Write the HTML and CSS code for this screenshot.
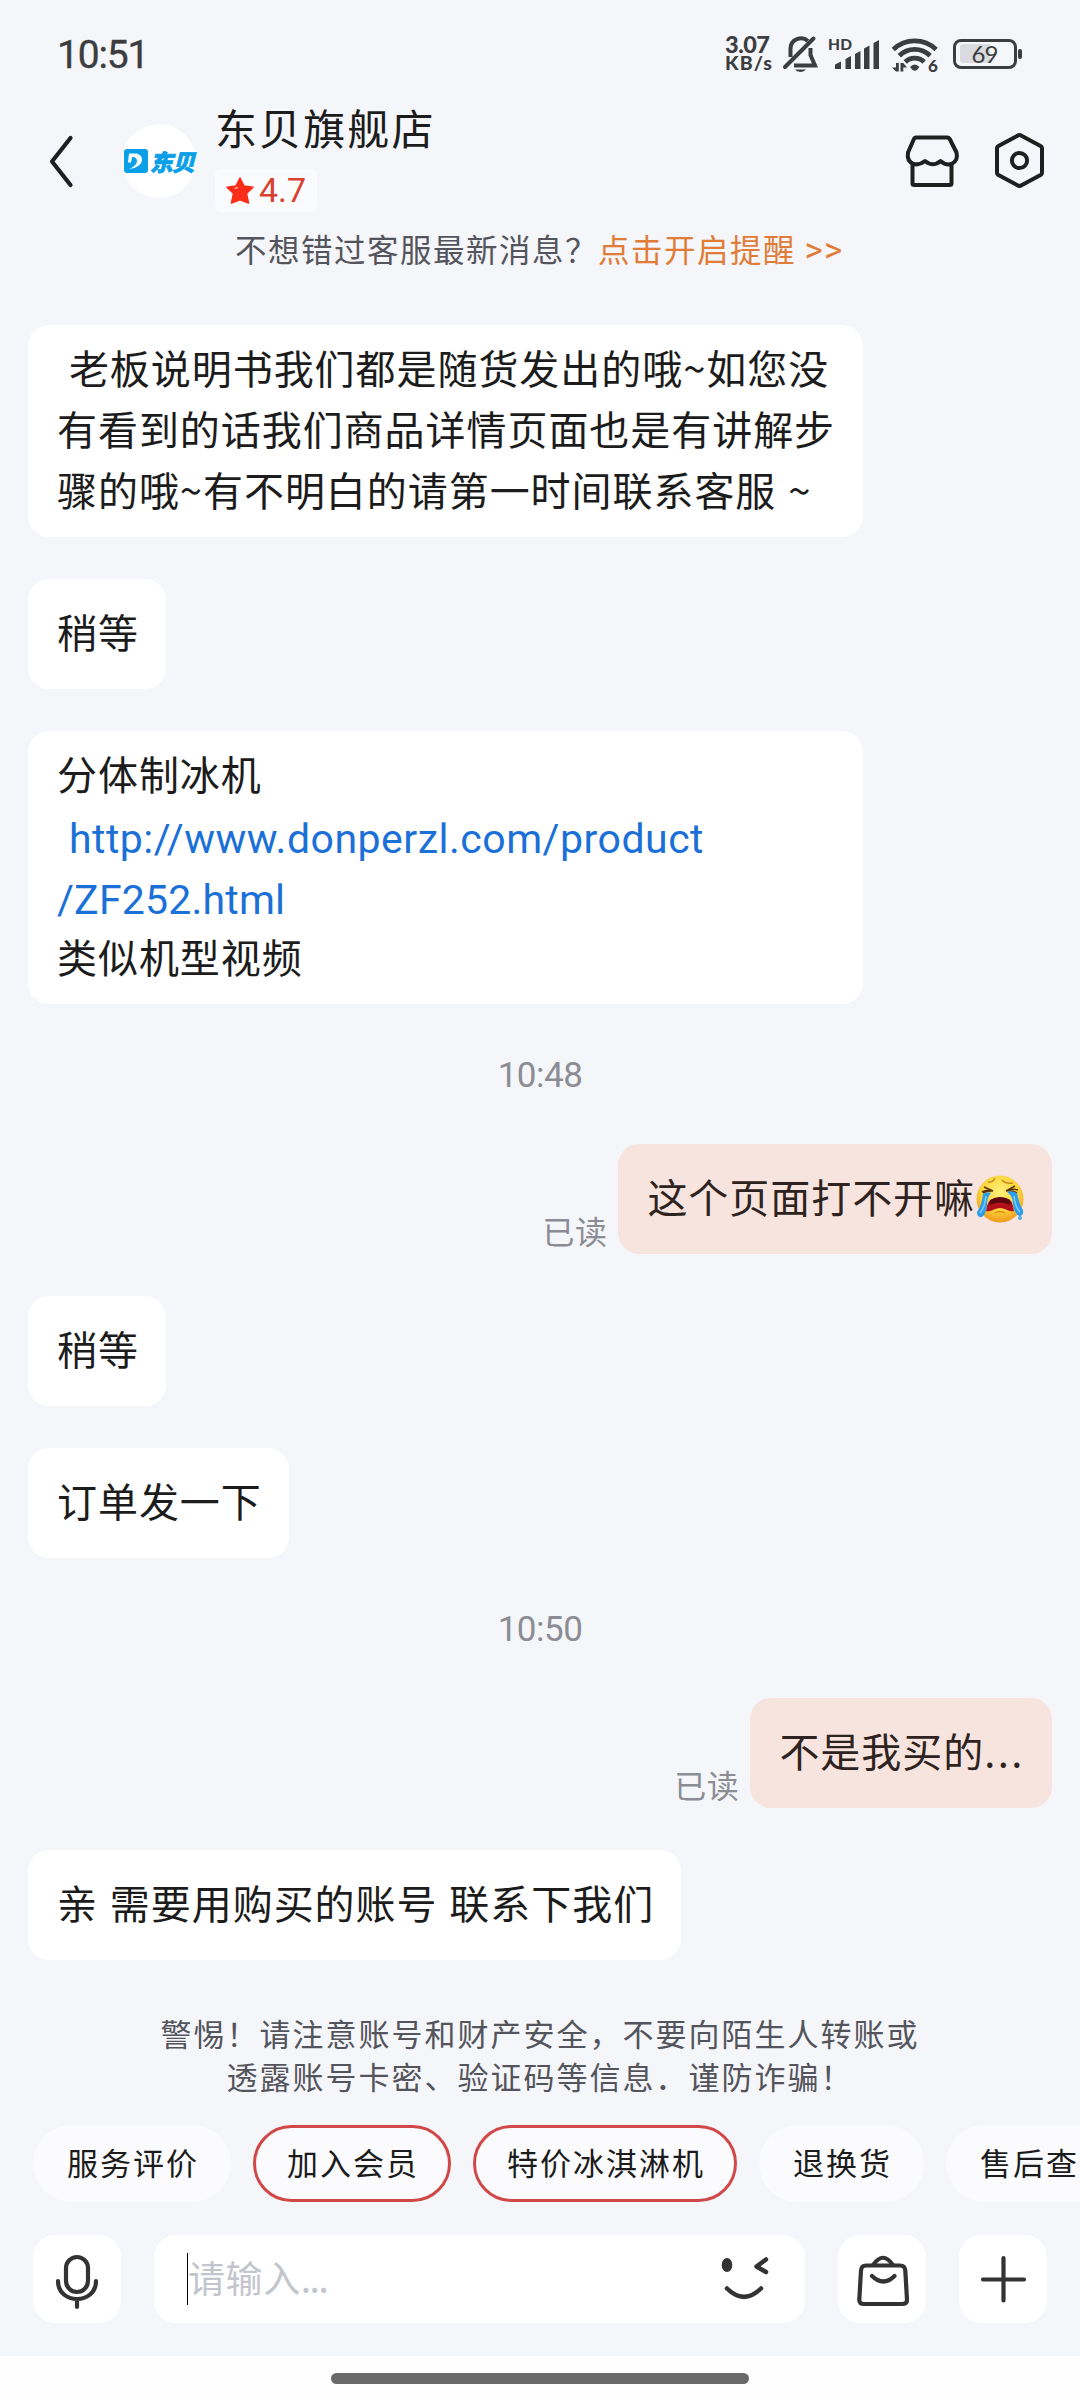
FILE: index.html
```html
<!DOCTYPE html>
<html lang="zh-CN">
<head>
<meta charset="utf-8">
<title>东贝旗舰店</title>
<link rel="stylesheet" href="styles.css">
</head>
<body>
<div class="screen">
  <div class="status">
    <span class="clock">10:51</span>
    <svg class="status-icons" viewBox="720 30 310 50" fill="#3c3d3f">
      <g class="bold">
        <text x="725" y="53" font-size="23.5" textLength="45">3.07</text>
        <text x="725" y="70" font-size="19.5" textLength="47">KB/s</text>
        <text x="828" y="50" font-size="15.5" textLength="24">HD</text>
        <text x="928" y="72" font-size="17">6</text>
      </g>
      <g fill="none" stroke="#3c3d3f" stroke-width="4">
        <path d="M790.5 57V48.500A10.500 10.500 0 0 1 808 41M810.500 48V55L815 65.500H794"/>
        <path d="M785 67 813.500 38.500" stroke-linecap="round"/>
      </g>
      <path d="M795 69.500h11a6 4 0 0 1-11 0z"/>
      <path d="M835 64.500l6-3v7.500h-6zM845.500 59l5.500-3v13h-5.500zM855 54l5.500-3v18h-5.500zM864 48.500l5.500-3v23.500h-5.500zM873.500 43l5.500-3v29h-5.500z"/>
      <g fill="none" stroke="#3c3d3f" stroke-width="4.800">
        <path d="M893.300 49.500a31 31 0 0 1 42.800 0"/>
        <path d="M899.300 55.700a22 22 0 0 1 30.800 0"/>
        <path d="M905.300 62a13.500 13.500 0 0 1 18.800 0"/>
      </g>
      <path d="M910 67q4.700-5 9.400 0l-2.500 3q-2.200 1.500-4.400 0z"/>
      <path d="M896 63h2.800v8.500h-2.800l-4-4h4zM900.500 63h2.800l3.700 4.500h-3.700v4h-2.800z"/>
      <rect x="954.500" y="40.500" width="61" height="27" rx="6.500" fill="none" stroke="#3c3d3f" stroke-width="3"/>
      <path d="M963 44h27v19h-27a3 3 0 0 1-3-3V47a3 3 0 0 1 3-3z" fill="#dadbde"/>
      <rect x="1018" y="49" width="4" height="10" rx="2"/>
      <text class="pct" x="971.500" y="62.500" font-size="24" textLength="27">69</text>
    </svg>
  </div>

  <header class="header">
    <svg class="back" viewBox="48 134 26 56"><path d="M70.500 138 52 161.500 70.500 185" fill="none" stroke="#1f1f1f" stroke-width="4.200" stroke-linecap="round" stroke-linejoin="round"/></svg>
    <div class="avatar">
      <svg class="mark" viewBox="0 0 24 24"><rect width="24" height="24" rx="3" fill="#0b9fe8"/><path d="M5 4.500h7c9 1 9 14-7 15.500 8-3 10-9 6-11.500-1-.6-2-.5-3-.500L7 13.500H4z" fill="#fff"/></svg>
      <span class="brand">东贝</span>
    </div>
    <div class="shop">
      <div class="shop-name">东贝旗舰店</div>
      <div class="rating">
        <svg class="star" viewBox="0 0 28 27"><path d="M14 1l4 8 9 1.300-6.500 6.200 2 9.500-8.500-3.200L5.500 26l2-9.500L1 10.300 10 9z" fill="#fb2c18" stroke="#fb2c18" stroke-width="1.500" stroke-linejoin="round"/><path d="M8.500 11.500l3.500-1" stroke="#ffa08f" stroke-width="1.500"/></svg>
        <span>4.7</span>
      </div>
    </div>
    <div class="header-actions">
      <svg class="store" viewBox="902 132 60 58" fill="none" stroke="#1f1f1f" stroke-width="4" stroke-linejoin="round" stroke-linecap="round">
        <path d="M916 137.500h31q2 0 3 2l6.500 13q2 8-5 11.500-5.500 2-11-3-7.500 6.500-15.500 0-6 4.500-11.500 3-7-3-5.500-11.500l5.500-12.500q.8-2.500 2.500-2.500z"/>
        <path d="M912.500 165v18.500q0 1.500 2 1.500h35q2 0 2-1.500V165"/>
      </svg>
      <svg class="hex" viewBox="992 131 55 61" fill="none" stroke="#1f1f1f" stroke-width="4" stroke-linejoin="round">
        <path d="M1019.500 136q1 0 2 .8l19.500 10.500q1 .8 1 2v24.500q0 1.200-1 2l-19.500 10.500q-2 1.300-4 0L998 175.800q-1-.8-1-2v-24.500q0-1.200 1-2l19.500-10.500q1-.8 2-.8z"/>
        <circle cx="1019.500" cy="161.500" r="7.600"/>
      </svg>
    </div>
  </header>

  <div class="remind">不想错过客服最新消息？<span class="remind-link">点击开启提醒 <span class="arrows">&gt;&gt;</span></span></div>

  <main class="chat">
    <div class="bubble wide"> 老板说明书我们都是随货发出的哦~如您没
有看到的话我们商品详情页面也是有讲解步
骤的哦~有不明白的请第一时间联系客服 ~</div>
    <div class="bubble">稍等</div>
    <div class="bubble wide">分体制冰机
 <a class="link">http://www.donperzl.com/product</a>
<a class="link tight">/ZF252.html</a>
类似机型视频</div>
    <div class="time">10:48</div>
    <div class="sent">
      <span class="read">已读</span>
      <div class="bubble mine">这个页面打不开嘛<svg class="emoji" viewBox="0 0 48 48">
          <defs><radialGradient id="face" cx=".5" cy=".35" r=".65"><stop offset="0" stop-color="#fff07a"/><stop offset=".6" stop-color="#fdd43c"/><stop offset="1" stop-color="#ee9a1c"/></radialGradient></defs>
          <circle cx="24" cy="24" r="23.500" fill="url(#face)"/>
          <path d="M12 7q5 .5 7-4M26 5q3 4 11 3" fill="none" stroke="#c98a1a" stroke-width="1.500"/>
          <path d="M11 31q1-8 13-8.500T37 31l1 5q-4 1-8-1.500-6-3-12 0-4 2.500-8 1.500z" fill="#b3101c"/>
          <path d="M14 25q10-6 20 0l1 5q-11-5-22 0z" fill="#5d0710"/>
          <path d="M6 17q5-3 11-1-6-.5-10 2M42 15q-6-2-12 1 6-1 11 2M8 12l9 4M39 11l-9 5" fill="none" stroke="#5b350c" stroke-width="1.600"/>
          <path d="M7 19q5-3 8-1-4 4-4 12-1 9-5 12-5 1-5-5 5-7 6-18zM41 18q-6-3-10-1 6 4 6 12 1 9 6 12 5 0 4-6-4-6-6-17z" fill="#2c9ded"/>
          <path d="M10 21q-1 11-6 17M38 21q1 11 6 16" fill="none" stroke="#79ccff" stroke-width="1.600"/>
          <path d="M19 38q5-3 10 0" fill="none" stroke="#d98a15" stroke-width="1.400"/>
          <circle cx="44" cy="43" r="2" fill="#4ea9e8"/>
        </svg></div>
    </div>
    <div class="bubble">稍等</div>
    <div class="bubble">订单发一下</div>
    <div class="time">10:50</div>
    <div class="sent">
      <span class="read">已读</span>
      <div class="bubble mine">不是我买的<span class="dots">...</span></div>
    </div>
    <div class="bubble">亲 需要用购买的账号 联系下我们</div>
  </main>

  <p class="warning">警惕！请注意账号和财产安全，不要向陌生人转账或<br>透露账号卡密、验证码等信息．谨防诈骗！</p>

  <div class="chips">
    <span class="chip">服务评价</span>
    <span class="chip hot">加入会员</span>
    <span class="chip hot">特价冰淇淋机</span>
    <span class="chip">退换货</span>
    <span class="chip">售后查询</span>
  </div>

  <div class="composer">
    <div class="tool">
      <svg viewBox="0 0 88 88" fill="none" stroke="#333" stroke-width="4.200" stroke-linecap="round">
        <rect x="33" y="22" width="22" height="35" rx="11"/>
        <path d="M25 46C25 70 63 70 63 46M44 65v7"/>
      </svg>
    </div>
    <div class="input">
      <span class="placeholder">请输入<span class="ph-dots">...</span></span>
      <svg class="wink" viewBox="719 2258 52 50" fill="none" stroke="#333" stroke-width="4.500" stroke-linecap="round" stroke-linejoin="round">
        <ellipse cx="727" cy="2269" rx="5.300" ry="7" fill="#333" stroke="none"/>
        <path d="M766 2263.500 756.500 2270.500 766 2276M727 2292.500Q744 2309 761 2292.500"/>
      </svg>
    </div>
    <div class="tool">
      <svg viewBox="838 2235 88 88" fill="none" stroke="#333" stroke-width="4.200" stroke-linecap="round" stroke-linejoin="round">
        <path d="M866 2265.500h34q5 0 5.300 5l1.700 29.500q0 4-5 4h-38q-5 0-4.700-4.500l1.700-29q.3-5 5-5z"/>
        <path d="M873.500 2264.500q9.500-13.500 19 0M872 2276q11.500 11 22.500 0"/>
      </svg>
    </div>
    <div class="tool">
      <svg viewBox="0 0 88 88" fill="none" stroke="#333" stroke-width="4.200" stroke-linecap="round"><path d="M24 44.500h41M44.500 23v42.500"/></svg>
    </div>
  </div>

  <div class="nav"><div class="nav-bar"></div></div>
</div>
</body>
</html>
```
FILE: styles.css
```css
* { box-sizing: border-box; }

body {
  margin: 0;
  background: #f5f6fa;
  font-family: "Noto Sans CJK SC", "Noto Sans", sans-serif;
  color: #1c1c1c;
}

.screen {
  width: 1080px;
  height: 2400px;
  display: flex;
  flex-direction: column;
  overflow: hidden;
}

svg { display: block; flex: none; }

/* status bar */
.status {
  height: 110px;
  padding: 30px 50px 0 57px;
  display: flex;
  justify-content: space-between;
  align-items: flex-start;
}
.clock {
  font: 400 39px/50px Roboto, sans-serif;
  color: #3c3d3f;
  letter-spacing: -1.2px;
  -webkit-text-stroke: .4px #3c3d3f;
}
.status-icons { width: 310px; height: 50px; }
.status-icons .bold { font-family: Lato, sans-serif; font-weight: 900; }
.status-icons .pct { font-family: Lato, sans-serif; font-weight: 400; }

/* header */
.header {
  height: 106px;
  padding: 0 33px 0 48px;
  display: flex;
  align-items: center;
}
.back { width: 26px; height: 56px; margin-top: -3px; }
.avatar {
  width: 74px;
  height: 74px;
  margin: -4px 0 0 48px;
  border-radius: 50%;
  background: #fff;
  display: flex;
  align-items: center;
  justify-content: center;
  gap: 2px;
}
.mark { width: 24px; height: 24px; }
.brand {
  font-size: 23px;
  line-height: 24px;
  font-weight: 900;
  font-style: italic;
  letter-spacing: -.8px;
  color: #0b9fe8;
  -webkit-text-stroke: .7px #0b9fe8;
}
.shop {
  height: 106px;
  margin-left: 19px;
  display: flex;
  flex-direction: column;
  align-items: flex-start;
}
.shop-name {
  height: 59px;
  font-size: 42px;
  line-height: 33px;
  letter-spacing: 2.1px;
}
.rating {
  width: 102px;
  height: 43px;
  padding-left: 11px;
  border-radius: 6px;
  background: #fafbfd;
  display: flex;
  align-items: center;
  gap: 5px;
  font: 400 34px/43px Roboto, sans-serif;
  color: #d9402f;
}
.star { width: 28px; height: 27px; }
.header-actions {
  margin: -5px 0 0 auto;
  display: flex;
  align-items: center;
  gap: 30px;
}
.store { width: 60px; height: 58px; }
.hex { width: 55px; height: 61px; }

.remind {
  height: 109px;
  padding: 10px 0 0 235px;
  font-size: 31.5px;
  line-height: 44px;
  letter-spacing: 1.5px;
  color: #54555c;
  white-space: nowrap;
}
.remind-link { color: #e07c38; }
.arrows { font-family: Roboto, sans-serif; font-size: 35px; letter-spacing: 1px; }

/* conversation */
.chat {
  padding: 0 28px;
  display: flex;
  flex-direction: column;
  align-items: flex-start;
  gap: 42px;
}
.bubble {
  min-height: 110px;
  padding: 12px 27px 18px 29px;
  border-radius: 21px;
  background: #fff;
  font-size: 40px;
  line-height: 60.75px;
  letter-spacing: .95px;
  word-spacing: 2px;
  white-space: pre;
  display: block;
}
.bubble:not(.wide) { line-height: 80px; }
.wide { width: 835px; padding-right: 0; }
.link {
  font-family: Roboto, "Noto Sans CJK SC", sans-serif;
  font-size: 41px;
  line-height: 40px;
  letter-spacing: .5px;
  vertical-align: -2px;
  color: #1b70d8;
}
.tight { letter-spacing: .2px; }
.time {
  align-self: center;
  height: 56px;
  font: 400 35px/59px Roboto, sans-serif;
  letter-spacing: -.5px;
  color: #8c8d94;
}
.sent {
  align-self: flex-end;
  display: flex;
  align-items: flex-end;
  gap: 11px;
}
.read {
  font-size: 32px;
  line-height: 47px;
  letter-spacing: .5px;
  color: #8c8d94;
}
.mine { background: #f8e4de; color: #2e2320; display: flex; align-items: center; }
.emoji { width: 48px; height: 48px; margin: 6px 1px 0 1px; }
.dots { letter-spacing: 2.500px; }

.warning {
  margin: 52px 0 2px;
  text-align: center;
  font-size: 31px;
  line-height: 42.500px;
  letter-spacing: 2px;
  color: #54555c;
}

/* quick replies */
.chips {
  margin-top: 26px;
  padding-left: 33px;
  display: flex;
  gap: 22px;
  overflow: hidden;
}
.chip {
  flex: none;
  height: 77px;
  padding: 0 32px 0 34px;
  border-radius: 39px;
  background: #fbfbfd;
  font-size: 31px;
  line-height: 73px;
  letter-spacing: 2px;
}
.hot { padding: 0 29px 0 31px; border: 3px solid #d14848; line-height: 67px; }

/* composer */
.composer {
  margin-top: 33px;
  padding: 0 33px;
  display: flex;
  gap: 33px;
}
.tool {
  width: 88px;
  height: 88px;
  border-radius: 22px;
  background: #fff;
}
.tool svg { width: 88px; height: 88px; }
.input {
  flex: 1;
  height: 88px;
  padding: 0 34px 0 33px;
  border-radius: 22px;
  background: #fff;
  display: flex;
  align-items: center;
  justify-content: space-between;
}
.placeholder {
  height: 52px;
  border-left: 1px solid #000;
  font-size: 37px;
  line-height: 49px;
  letter-spacing: .6px;
  color: #c3c5cc;
}
.ph-dots { letter-spacing: -1.500px; }
.wink { width: 52px; height: 50px; }

.nav {
  margin-top: auto;
  height: 44px;
  padding-top: 17px;
  background: #fefefe;
}
.nav-bar {
  width: 418px;
  height: 11px;
  margin: 0 auto;
  border-radius: 6px;
  background: #696969;
}
```
